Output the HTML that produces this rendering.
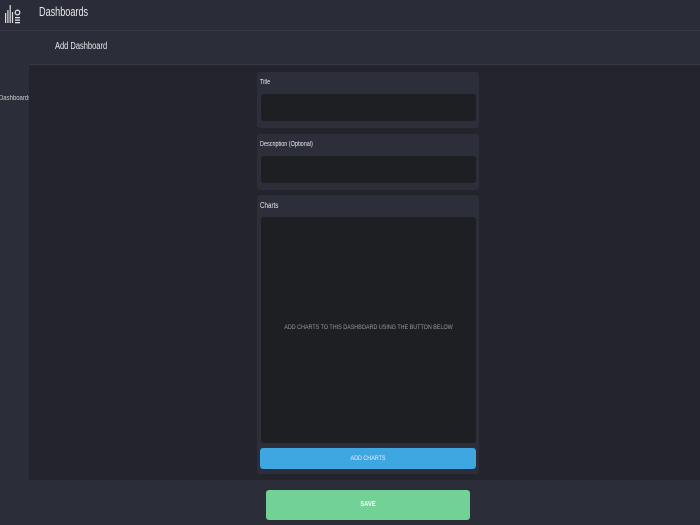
<!DOCTYPE html>
<html><head><style>
*{margin:0;padding:0;box-sizing:border-box}
body{width:700px;height:525px;background:#2b2d38;font-family:"Liberation Sans",sans-serif;color:#e8e8ec;position:relative;overflow:hidden}
.abs{position:absolute}
.s{transform-origin:left top;transform:scaleX(0.78);white-space:nowrap}
.c{transform-origin:center top;transform:scaleX(0.83);white-space:nowrap}
</style></head><body>
<div class="abs" style="left:0;top:0;width:700px;height:31px;background:#2a2c37;border-bottom:1px solid #373946"></div>
<svg class="abs" style="left:4px;top:3px" width="18" height="22" viewBox="0 0 18 22"><g fill="#ddd"><rect x="1" y="10" width="1.2" height="10"/><rect x="3.3" y="7" width="1.2" height="13"/><rect x="5.6" y="2" width="1.2" height="18"/><rect x="7.9" y="9" width="1.2" height="11"/><rect x="11" y="14" width="5" height="1.3"/><rect x="11" y="16.5" width="5" height="1.3"/><rect x="11" y="19" width="5" height="1.3"/></g><circle cx="13.5" cy="9.5" r="2.3" fill="none" stroke="#ddd" stroke-width="1.3"/></svg>
<div class="abs s" style="left:39px;top:4px;font-size:13px;transform:scaleX(0.7)">Dashboards</div>
<div class="abs" style="left:29px;top:31px;width:671px;height:34px;background:#2b2d38;border-bottom:1px solid #363845"></div>
<div class="abs s" style="left:55px;top:41px;font-size:10px;transform:scaleX(0.75)">Add Dashboard</div>
<div class="abs s" style="left:-1px;top:95px;font-size:7px;color:#ccc;transform:scaleX(0.85)">Dashboards</div>
<div class="abs" style="left:29px;top:65px;width:671px;height:415px;background:#23242c"></div>
<div class="abs" style="left:257px;top:72px;width:222px;height:56px;background:#2c2e39;border-radius:3px"></div>
<div class="abs s" style="left:260px;top:79px;font-size:7px">Title</div>
<div class="abs" style="left:261px;top:94px;width:215px;height:27px;background:#1e1f23;border-radius:3px"></div>
<div class="abs" style="left:257px;top:134px;width:222px;height:56px;background:#2c2e39;border-radius:3px"></div>
<div class="abs s" style="left:260px;top:141px;font-size:7px">Description (Optional)</div>
<div class="abs" style="left:261px;top:156px;width:215px;height:27px;background:#1e1f23;border-radius:3px"></div>
<div class="abs" style="left:257px;top:195px;width:222px;height:279px;background:#2c2e39;border-radius:3px"></div>
<div class="abs s" style="left:260px;top:201px;font-size:8px">Charts</div>
<div class="abs" style="left:261px;top:217px;width:215px;height:226px;background:#1e1f23;border-radius:3px"></div>
<div class="abs c" style="left:261px;top:324px;width:215px;text-align:center;font-size:6.5px;color:#999">ADD CHARTS TO THIS DASHBOARD USING THE BUTTON BELOW</div>
<div class="abs" style="left:260px;top:448px;width:216px;height:21px;background:#3ea6e0;border-radius:3px"></div>
<div class="abs c" style="left:260px;top:448px;width:216px;font-size:6.5px;text-align:center;line-height:21px;color:#eef">ADD CHARTS</div>
<div class="abs" style="left:266px;top:490px;width:204px;height:30px;background:#72d296;border-radius:3px"></div>
<div class="abs c" style="left:266px;top:490px;width:204px;font-size:7px;font-weight:bold;text-align:center;line-height:30px;color:#f4fff6">SAVE</div>
</body></html>
